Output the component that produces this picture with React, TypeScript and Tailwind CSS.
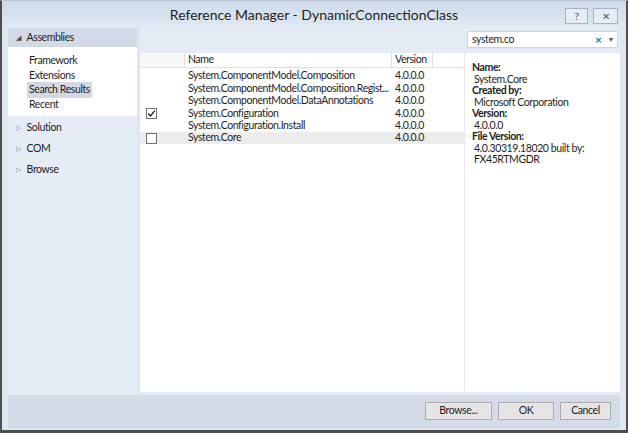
import React from "react"

const FONT = { fontFamily: 'Lato, "Liberation Sans", sans-serif' }

const ROWS = [
  { name: "System.ComponentModel.Composition", ver: "4.0.0.0", box: null },
  { name: "System.ComponentModel.Composition.Regist...", ver: "4.0.0.0", box: null },
  { name: "System.ComponentModel.DataAnnotations", ver: "4.0.0.0", box: null },
  { name: "System.Configuration", ver: "4.0.0.0", box: "checked" },
  { name: "System.Configuration.Install", ver: "4.0.0.0", box: null },
  { name: "System.Core", ver: "4.0.0.0", box: "empty", sel: true },
] as const

function Box({ checked }: { checked: boolean }) {
  return (
    <div className="w-[11px] h-[11px] border border-[#707070] bg-white flex items-center justify-center">
      {checked && (
        <svg width="9" height="9" viewBox="0 0 9 9">
          <path d="M1.2 4.6 L3.5 7 L7.8 1.6" fill="none" stroke="#222" strokeWidth="1.4" />
        </svg>
      )}
    </div>
  )
}

function NavGroup({ label }: { label: string }) {
  return (
    <div className="h-[21px] flex items-center pl-[8px] gap-[6px] text-[#1e1e1e]">
      <span className="text-[7px] text-[#777]">▷</span>
      <span>{label}</span>
    </div>
  )
}

function Btn({ label, w }: { label: string; w: string }) {
  return (
    <div className={`${w} h-[18px] border border-[#acacac] bg-[#e5e5e5] flex items-center justify-center text-[#1e1e1e]`}>
      {label}
    </div>
  )
}

export default function App() {
  return (
    <div className="w-[628px] h-[433px] bg-white" style={FONT}>
      <div className="w-full h-full flex flex-col bg-[#dde7f2] border-l-2 border-r-2 border-b-[3px] border-t border-l-[#4e4e4e] border-r-[#4e4e4e] border-b-[#4e4e4e] border-t-[#b8c4d2] text-[10.5px] tracking-[-0.4px]">
        {/* title bar */}
        <div className="h-[25px] shrink-0 flex items-center relative bg-gradient-to-b from-[#cedbeb] to-[#dfe8f3]">
          <div className="flex-1 text-center text-[14px] tracking-normal text-[#1e1e1e] pt-[1px]">Reference Manager - DynamicConnectionClass</div>
          <div className="absolute right-[8px] top-[7px] flex gap-[5px]">
            <div className="w-[23px] h-[16px] border border-[#a8b4c4] bg-[#e6edf5] flex items-center justify-center text-[10px] text-[#555]">?</div>
            <div className="w-[25px] h-[16px] border border-[#a8b4c4] bg-[#e6edf5] flex items-center justify-center text-[10px] text-[#555]">✕</div>
          </div>
        </div>

        {/* body */}
        <div className="flex-1 flex pl-[6px] pr-[6px]">
          {/* left nav */}
          <div className="w-[129px] bg-[#e6ecf6] flex flex-col pt-[2px]">
            <div className="h-[19px] bg-[#d4dae5] flex items-center pl-[8px] gap-[6px] text-[#1e1e1e]">
              <span className="text-[7px] text-[#444]">◢</span>
              <span>Assemblies</span>
            </div>
            <div className="bg-white pt-[7px] pb-[4px] flex flex-col">
              {["Framework", "Extensions", "Search Results", "Recent"].map(t => (
                <div key={t} className="h-[14.5px] flex items-center pl-[21px]">
                  <span className={`px-[2px] -ml-[2px] text-[#1e1e1e] ${t === "Search Results" ? "bg-[#d4d8e2]" : ""}`}>{t}</span>
                </div>
              ))}
            </div>
            <div className="pt-[1px]">
              <NavGroup label="Solution" />
              <NavGroup label="COM" />
              <NavGroup label="Browse" />
            </div>
          </div>

          {/* right area */}
          <div className="flex-1 flex flex-col ml-[3px] bg-[#e4ebf5]">
            <div className="h-[27px] shrink-0 flex items-center justify-end pr-[2px]">
              <div className="w-[151px] h-[17px] bg-white border border-[#ccd4de] flex items-center pl-[4px] pr-[3px]">
                <span className="flex-1 text-[#1e1e1e]">system.co</span>
                <span className="text-[#2b6fc0] text-[12px] font-bold mr-[6px]">×</span>
                <span className="text-[#555] text-[7px]">▼</span>
              </div>
            </div>
            <div className="flex-1 flex mb-[3px]">
              {/* list */}
              <div className="w-[325px] bg-white flex flex-col border-r border-[#e8e8e8]">
                <div className="h-[15px] flex border-b border-[#e0e0e0] text-[#1e1e1e]">
                  <div className="w-[45px] border-r border-[#e0e0e0] bg-[#f7f7f7]" />
                  <div className="w-[207px] border-r border-[#e0e0e0] pl-[3px] flex items-center">Name</div>
                  <div className="w-[41px] border-r border-[#e0e0e0] pl-[3px] flex items-center">Version</div>
                  <div className="flex-1" />
                </div>
                <div className="pt-[2px]">
                  {ROWS.map(r => (
                    <div key={r.name} className={`h-[12.4px] flex items-center text-[#1e1e1e] ${"sel" in r && r.sel ? "bg-[#ececec]" : ""}`}>
                      <div className="w-[45px] pl-[6px] flex items-center">
                        {r.box && <Box checked={r.box === "checked"} />}
                      </div>
                      <div className="w-[207px] pl-[3px] whitespace-nowrap overflow-hidden">{r.name}</div>
                      <div className="w-[41px] pl-[3px]">{r.ver}</div>
                    </div>
                  ))}
                </div>
              </div>
              {/* details */}
              <div className="flex-1 bg-white pl-[7px] pt-[9px] leading-[11.5px] text-[#1e1e1e] flex flex-col">
                <div className="font-bold">Name:</div>
                <div className="pl-[2px]">System.Core</div>
                <div className="font-bold">Created by:</div>
                <div className="pl-[2px]">Microsoft Corporation</div>
                <div className="font-bold">Version:</div>
                <div className="pl-[2px]">4.0.0.0</div>
                <div className="font-bold">File Version:</div>
                <div className="pl-[2px]">4.0.30319.18020 built by:</div>
                <div className="pl-[2px]">FX45RTMGDR</div>
              </div>
            </div>
          </div>
        </div>

        {/* bottom bar */}
        <div className="h-[33px] shrink-0 mx-[6px] mb-[2px] bg-[#d5dbe6] flex items-center justify-end gap-[6px] pr-[9px] pb-[1px]">
          <Btn label="Browse..." w="w-[67px]" />
          <Btn label="OK" w="w-[56px]" />
          <Btn label="Cancel" w="w-[51px]" />
        </div>
      </div>
    </div>
  )
}
